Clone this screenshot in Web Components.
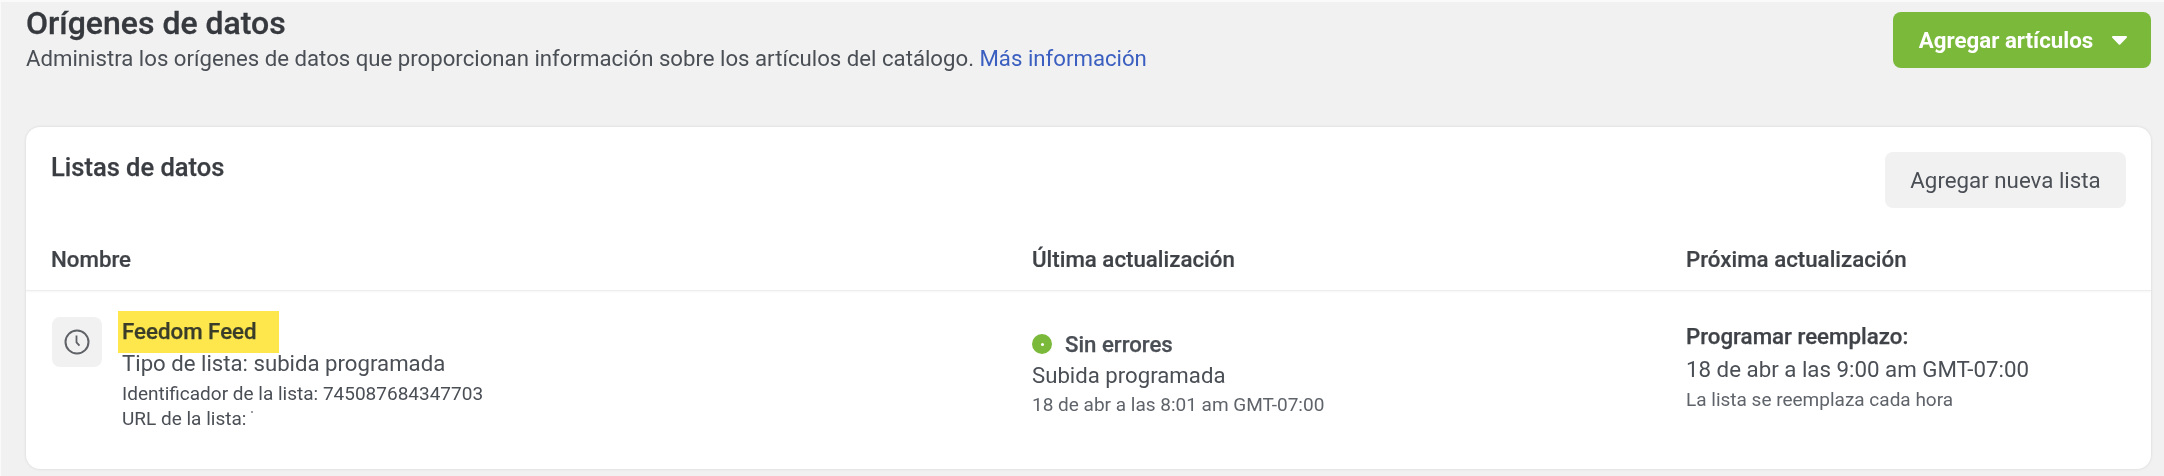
<!DOCTYPE html>
<html lang="es">
<head>
<meta charset="utf-8">
<title>Orígenes de datos</title>
<style>
  html, body { margin: 0; height: 476px; overflow: hidden; background: #fafafa; }
  body { font-family: Roboto, "Liberation Sans", sans-serif; color: #4a4e55; }
</style>
</head>
<body>
<sources-page>
  <page-header slot="header">
    <span slot="title">Orígenes de datos</span>
    <span slot="description">Administra los orígenes de datos que proporcionan información sobre los artículos del catálogo.</span>
    <a slot="link">Más información</a>
    <action-button slot="action" variant="primary" caret>Agregar artículos</action-button>
  </page-header>
  <data-card slot="card">
    <span slot="title">Listas de datos</span>
    <action-button slot="action">Agregar nueva lista</action-button>
    <span slot="col1">Nombre</span>
    <span slot="col2">Última actualización</span>
    <span slot="col3">Próxima actualización</span>
    <feed-name slot="name"
      name="Feedom Feed"
      kind="Tipo de lista: subida programada"
      list-id="Identificador de la lista: 745087684347703"
      url="URL de la lista:"></feed-name>
    <feed-status slot="status"
      label="Sin errores"
      kind="Subida programada"
      time="18 de abr a las 8:01 am GMT-07:00"></feed-status>
    <feed-schedule slot="schedule"
      label="Programar reemplazo:"
      time="18 de abr a las 9:00 am GMT-07:00"
      note="La lista se reemplaza cada hora"></feed-schedule>
  </data-card>
</sources-page>

<script>
  // small helper, every element just clones its own template
  const makeTemplate = html => {
    const t = document.createElement('template')
    t.innerHTML = html
    return t
  }

  class Base extends HTMLElement {
    constructor() {
      super()
      this.attachShadow({ mode: 'open' })
      this.shadowRoot.appendChild(this.constructor.template.content.cloneNode(true))
    }
    fill(map) {
      Object.keys(map).forEach(id => {
        this.shadowRoot.getElementById(id).textContent = this.getAttribute(map[id])
      })
    }
  }

  class SourcesPage extends Base {
    static template = makeTemplate(`
      <style>
        :host { display: flex; flex-direction: column; box-sizing: border-box; height: 474px;
                margin: 2px 0 0 1px; padding: 0 13px 0 25px; background: #f1f1f1; filter: blur(0.35px); }
      </style>
      <slot name="header"></slot>
      <slot name="card"></slot>
    `)
  }

  class PageHeader extends Base {
    static template = makeTemplate(`
      <style>
        :host { display: flex; justify-content: space-between; height: 125px; }
        .title { font-size: 32px; line-height: 36px; font-weight: 500; color: #36393e; margin-top: 3px;
                 -webkit-text-stroke: 0.3px #36393e; }
        .desc { font-size: 22.2px; line-height: 26px; margin-top: 4px; }
        ::slotted(a) { color: #3b5fc0; }
        .side { padding-top: 10px; }
      </style>
      <div>
        <div class="title"><slot name="title"></slot></div>
        <div class="desc"><slot name="description"></slot> <slot name="link"></slot></div>
      </div>
      <div class="side"><slot name="action"></slot></div>
    `)
  }

  class ActionButton extends Base {
    static template = makeTemplate(`
      <style>
        :host { display: inline-flex; align-items: center; justify-content: center; box-sizing: border-box;
                width: 241px; height: 56px; border-radius: 8px; background: #f1f1f1; color: #4a4e55;
                font-size: 22.3px; }
        :host([variant=primary]) { width: 258px; padding-left: 2px; background: #7ab93a; color: #fff; font-weight: 700; }
        svg { display: none; margin-left: 19px; }
        :host([caret]) svg { display: block; }
      </style>
      <slot></slot>
      <svg width="15" height="9" viewBox="0 0 15 9"><path d="M1 0h13a1 1 0 0 1 .7 1.7L8.2 8.4a1 1 0 0 1-1.4 0L.3 1.7A1 1 0 0 1 1 0z" fill="#fff"/></svg>
    `)
  }

  class DataCard extends Base {
    static template = makeTemplate(`
      <style>
        :host { display: block; height: 342px; background: #fff; border-radius: 14px;
                box-shadow: 0 0 3px rgba(0,0,0,.12); overflow: hidden; }
        .top { display: flex; justify-content: space-between; padding: 25px 25px 0 25px; height: 103px; box-sizing: border-box; }
        .top .t { font-size: 25.5px; line-height: 32px; font-weight: 500; color: #3a3d42; margin-top: -1px;
                  -webkit-text-stroke: 0.25px #3a3d42; }
        .grid { display: grid; grid-template-columns: 981px 654px 1fr; padding-left: 25px; }
        .head { height: 60px; font-size: 22.3px; font-weight: 500; color: #3f4247; -webkit-text-stroke: 0.2px #3f4247;
                border-bottom: 1px solid #eceded; box-shadow: 0 1px 2px rgba(0,0,0,.04); line-height: 58px; }
        .body { padding-top: 20px; }
      </style>
      <div class="top">
        <div class="t"><slot name="title"></slot></div>
        <slot name="action"></slot>
      </div>
      <div class="grid head">
        <div><slot name="col1"></slot></div>
        <div><slot name="col2"></slot></div>
        <div><slot name="col3"></slot></div>
      </div>
      <div class="grid body">
        <slot name="name"></slot>
        <slot name="status"></slot>
        <slot name="schedule"></slot>
      </div>
    `)
  }

  class FeedName extends Base {
    static template = makeTemplate(`
      <style>
        :host { display: flex; gap: 16px; align-items: flex-start; padding-left: 1px; }
        .tile { width: 50px; height: 50px; margin-top: 6px; border-radius: 8px; background: #f1f1f1;
                display: flex; align-items: center; justify-content: center; }
        .hl { display: block; width: 161px; height: 42px; padding-left: 4px; box-sizing: border-box;
              background: #fde74c; font-size: 22.3px; font-weight: 500; line-height: 40px; color: #3a3d2a;
              -webkit-text-stroke: 0.25px #3a3d2a; }
        .kind { font-size: 22.2px; line-height: 26px; margin: -3px 0 0 4px; }
        .small { font-size: 19px; line-height: 26px; margin-left: 4px; }
        .kind + .small { margin-top: 5px; }
        .small + .small { margin-top: -1px; }
        .mark { display: inline-block; width: 2px; height: 2px; background: #9a9da3; vertical-align: 12px; margin-left: 5px; }
      </style>
      <div class="tile">
        <svg width="26" height="26" viewBox="0 0 26 26" fill="none" stroke="#5f6267">
          <circle cx="13" cy="13" r="11.5" stroke-width="2"/>
          <path d="M12.5 6.5v6.8l3 3.4" stroke-width="1.8"/>
        </svg>
      </div>
      <div>
        <span class="hl" id="name"></span>
        <div class="kind" id="kind"></div>
        <div class="small" id="listId"></div>
        <div class="small"><span id="url"></span><span class="mark"></span></div>
      </div>
    `)
    connectedCallback() {
      this.fill({ name: 'name', kind: 'kind', listId: 'list-id', url: 'url' })
    }
  }

  class FeedStatus extends Base {
    static template = makeTemplate(`
      <style>
        :host { display: block; padding-top: 21px; }
        .line { display: flex; align-items: center; gap: 13px; font-size: 22.2px; font-weight: 500; line-height: 24px;
                -webkit-text-stroke: 0.25px #4a4e55; }
        .dot { width: 20px; height: 20px; border-radius: 50%; background: #7ab93a; display: flex; align-items: center; justify-content: center; }
        .dot i { width: 3px; height: 3px; border-radius: 50%; background: #fff; }
        .kind { font-size: 22.2px; line-height: 26px; margin-top: 6px; }
        .time { font-size: 19px; line-height: 24px; margin-top: 5px; color: #5f636a; }
      </style>
      <div class="line"><span class="dot"><i></i></span><span id="label"></span></div>
      <div class="kind" id="kind"></div>
      <div class="time" id="time"></div>
    `)
    connectedCallback() {
      this.fill({ label: 'label', kind: 'kind', time: 'time' })
    }
  }

  class FeedSchedule extends Base {
    static template = makeTemplate(`
      <style>
        :host { display: block; padding-top: 13px; }
        .label { font-size: 22.3px; font-weight: 500; line-height: 24px; color: #3f4247; -webkit-text-stroke: 0.25px #3f4247; }
        .time { font-size: 22.3px; line-height: 26px; margin-top: 8px; }
        .note { font-size: 19px; line-height: 22px; margin-top: 7px; color: #5f636a; }
      </style>
      <div class="label" id="label"></div>
      <div class="time" id="time"></div>
      <div class="note" id="note"></div>
    `)
    connectedCallback() {
      this.fill({ label: 'label', time: 'time', note: 'note' })
    }
  }

  customElements.define('sources-page', SourcesPage)
  customElements.define('page-header', PageHeader)
  customElements.define('action-button', ActionButton)
  customElements.define('data-card', DataCard)
  customElements.define('feed-name', FeedName)
  customElements.define('feed-status', FeedStatus)
  customElements.define('feed-schedule', FeedSchedule)
</script>
</body>
</html>
